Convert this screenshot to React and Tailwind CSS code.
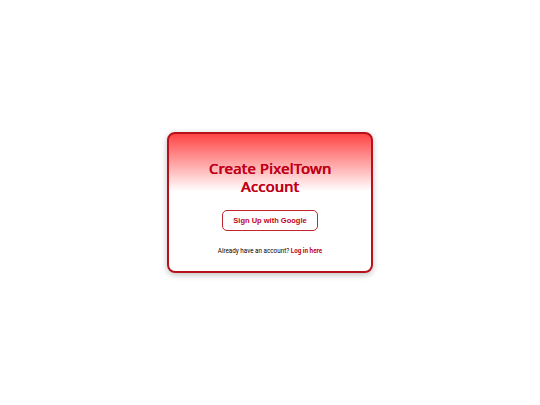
export default function App() {
  return (
    <div className="flex h-[405px] w-[540px] items-center justify-center bg-white">
      <div
        className="flex h-[141px] w-[206px] flex-col items-center rounded-[8px] border-2 border-[#b5121b] bg-[linear-gradient(to_bottom,#ff4545_0%,#ffffff_42%,#ffffff_100%)] pt-[26px] shadow-[0_2px_6px_rgba(0,0,0,0.25)]"
      >
        <h1
          className="text-center text-[15px] font-medium leading-[17.5px] text-[#c00018] [text-shadow:0.35px_0_0_#c00018]"
          style={{ fontFamily: '"Noto Sans", sans-serif' }}
        >
          Create PixelTown
          <br />
          Account
        </h1>
        <button
          className="mt-[15px] flex h-[21px] w-[96px] items-center justify-center rounded-[5px] border border-[#c0262e] bg-white text-[7.5px] font-bold text-[#c00018]"
          style={{ fontFamily: '"Liberation Sans", Arial, sans-serif' }}
        >
          Sign Up with Google
        </button>
        <p
          className="mt-[16px] text-[6.3px] text-black"
          style={{ fontFamily: 'Roboto, "Liberation Sans", Arial, sans-serif' }}
        >
          Already have an account?{" "}
          <a className="font-bold text-[#c00018]">Log in here</a>
        </p>
      </div>
    </div>
  );
}
